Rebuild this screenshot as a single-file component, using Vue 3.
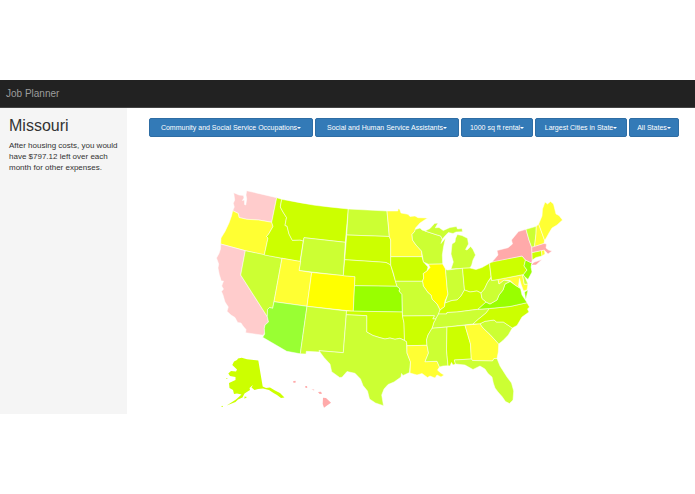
<script setup>
import { ref } from 'vue'

const selected = ref({ name: 'Missouri', left: '$797.12' })

const filters = [
  'Community and Social Service Occupations',
  'Social and Human Service Assistants',
  '1000 sq ft rental',
  'Largest Cities in State',
  'All States',
]

const states = [
  { name: 'Washington', tone: 'rose', d: 'M233.7 192.7L239 195L243.5 195.5L244 198L242.3 200.5L244.5 200L244.5 204.5L245.8 205L246.7 199L246 195L246.7 190.7L276.7 197.7L271.7 222.3L258.7 220L246.7 219.3L239 217.5L238.3 213.5L232.7 210.7L234.3 207L233.3 203.3L234.7 200Z' },
  { name: 'Oregon', tone: 'lemon', d: 'M232.7 210.7L238.3 213.5L239 217.5L246.7 219.3L258.7 220L271.7 222.3L273 226.5L268.7 234L266.5 236.5L268 238L264.3 255L245.3 250.7L220.7 244L221 238L225 231.5L229 223L231.5 216Z' },
  { name: 'California', tone: 'rose', d: 'M220.7 244L245.3 250.7L240.7 275L267.3 316.7L268.5 322L265 325L264.3 328.5L265 332L263.3 335.3L245.7 332.7L246 329.5L243 326L241 323L237.7 322.5L235 317.5L231 315L227 311.3L228.3 307L225 302L223 295L221.5 291.5L223.5 289L221.7 286L223.5 281L221.3 281L219.3 274.5L218 268L218.7 264L216.5 258L219 253.5L220.5 249Z' },
  { name: 'Nevada', tone: 'lime', d: 'M245.3 250.7L282 258.3L274 301.7L272.7 308.3L269.5 307.5L267.5 309.5L267.3 316.7L240.7 275Z' },
  { name: 'Idaho', tone: 'chartreuse', d: 'M276.7 197.7L281.7 199.3L280.3 207L283 212L286.5 217.5L285 225.5L287 226L289 234L292.3 240.3L300 240L303.3 241L300 261.5L264.3 255L268 238L266.5 236.5L268.7 234L273 226.5L271.7 222.3Z' },
  { name: 'Montana', tone: 'chartreuse', d: 'M281.7 199.3Q315 206.5 348.3 209L345.3 242.3L304 237.7L303.3 241L300 240L292.3 240.3L289 234L287 226L285 225.5L286.5 217.5L283 212L280.3 207Z' },
  { name: 'Wyoming', tone: 'lime', d: 'M304 237.7L345.3 242.3L343.3 275.7L299 270.5Z' },
  { name: 'Utah', tone: 'lemon', d: 'M282 258.3L300.7 261.5L299 270.5L311.7 272.5L307 306.3L274 301.7Z' },
  { name: 'Arizona', tone: 'green', d: 'M274 301.7L307 306.3L300.3 353.8L286.7 351.3L262.7 337.3L264.7 334L264.3 328.5L265 325L268.5 322L267.3 316.7L267.5 309.5L269.5 307.5L272.7 308.3Z' },
  { name: 'Colorado', tone: 'yellow', d: 'M311.7 272.5L355 276.7L353.3 311.3L307 306.3Z' },
  { name: 'New Mexico', tone: 'lime', d: 'M307 306.3L346.5 311L343.3 352.7L319 350.7L319.5 352L306.3 351.3L306 354L300.3 353.8Z' },
  { name: 'North Dakota', tone: 'lime', d: 'M348.3 209L387 211L389.3 236.5L346.7 235Z' },
  { name: 'South Dakota', tone: 'chartreuse', d: 'M346.7 235L389.3 236.5L390.7 240L390.7 265L386 262.5L380 262L344.7 259.7Z' },
  { name: 'Nebraska', tone: 'chartreuse', d: 'M344.7 259.7L380 262L386 262.5L390.7 265L393.3 274L397 286.3L354.5 285.7L355 276.7L343.3 275.7Z' },
  { name: 'Kansas', tone: 'emerald', d: 'M354.5 285.7L397 286.3L400 289L399 291L402 294.5L402.3 312L353.3 311.3Z' },
  { name: 'Oklahoma', tone: 'chartreuse', d: 'M346.5 311L402.3 312L402.5 316L404 323L404.5 340.3L400 338.3L395 339.3L390 338L385 339L380 337.7L373 335.5L366.7 332L366.7 315.7L346.3 314.7Z' },
  { name: 'Texas', tone: 'lime', d: 'M346.3 314.7L366.7 315.7L366.7 332L373 335.5L380 337.7L385 339L390 338L395 339.3L400 338.3L406.5 341.5L407 353L410.5 362L409.5 372.5L403 375.5L401.5 373.5L401 377L394 382L388 384.5L384 389L381.7 395L383.5 405.7L375.5 403L369.5 399L367.5 391L363 385.5L360.5 379L355 373.3L347 371.5L342 377.3L339.7 377.5L331.7 371.7L330 364L324 357.5L319 350.7L343.3 352.7Z' },
  { name: 'Minnesota', tone: 'lemon', d: 'M387 211L397.8 211L398 208.8L399.7 209.3L401 213L408 214.3L410 216.5L415 216L418 217.7L427.5 218L420 223L415.5 228L415 231L412 234.5L412.5 240L416 245L421.5 251L422 256.7L390.7 256.7L390.7 240L389.3 236.5L388.5 226Z' },
  { name: 'Iowa', tone: 'chartreuse', d: 'M390.7 256.7L422 256.7L423.5 262L428 267L427 271L423.3 273.5L423.7 278L422.5 281.3L395.5 281.3L393.3 273L390.7 265Z' },
  { name: 'Wisconsin', tone: 'lime', d: 'M415 229.5L420 228L422 230L425 231L435 234.3L440.7 236L442.3 239.3L441 243.5L445.5 238L443.5 247L442.3 255L442.7 264L428.5 264.3L423.5 262L421.5 251L416 245L412.5 240L412 234.5L415 231Z' },
  { name: 'Michigan', tone: 'lime', d: 'M425 231L430 228.5L434.5 223.5L438 223L435.3 227.8L439 227.5L443.3 230.5L450 227.5L456.5 226.5L457.5 229L462 228.5L462.5 231.7L456 232L453 233.5L448.3 232.5L444.5 236.5L442.3 239.3L440.7 236L435 234.3ZM457.3 234.5L462 235.5L467.5 238.3L468.5 244L465.5 249.5L467 250L470.7 246.5L473 249.5L475.5 255L473 260L471.7 265L470 268L451 269L453.3 262L451 254L452 244L455 242L455.5 238.5Z' },
  { name: 'Illinois', tone: 'yellow', d: 'M428.5 264.3L442.7 264L445.5 269L447.3 290L448 294L445 301L444.5 306.7L440 310L437 304L432 299L431 295L428.3 293L423.3 286L422.5 281.3L423.7 278L423.3 273.5L427 271L430 267.5Z' },
  { name: 'Indiana', tone: 'lime', d: 'M445.5 269.3L447.5 270L462.5 268.3L464.5 290L461 296L457 300L452 300.5L445 303L448 294L447.3 290Z' },
  { name: 'Ohio', tone: 'chartreuse', d: 'M462.5 268.3L470 268L476 269.5L482 267.5L489.5 263.3L491 277L487.5 282.5L484.5 289L481 293L477 291L470 292L464.5 290Z' },
  { name: 'Missouri', tone: 'lime', d: 'M395.5 281.3L422.5 281.3L423.3 286L428.3 293L431 295L432 299L437 304L440 310L438.5 314L436 319L432.7 319L434.3 315.7L402.5 316L402 294.5L399 291L400 289L397 286.3Z' },
  { name: 'Kentucky', tone: 'chartreuse', d: 'M438.5 314L440 310L444.5 306.7L445 303L452 300.5L457 300L461 296L464.5 290L470 292L477 291L481 293L482 298.5L486 302L478 309.3L457 312L447 312.5L446.5 314Z' },
  { name: 'Tennessee', tone: 'lime', d: 'M438.5 314L446.5 314L447 312.5L457 312L478 309.3L489.5 308.5L486 313L478 319.5L473 324L447 327L432 328.3L434 322Z' },
  { name: 'Arkansas', tone: 'chartreuse', d: 'M402.5 316L434.3 315.7L432.7 319L436 319L434 322L432 328.3L428 335L426.5 340L427 345.3L407 345.7L406.5 341.5L404.5 340.3L404 323Z' },
  { name: 'Louisiana', tone: 'lemon', d: 'M407 345.7L427 345.3L428.5 353L425 361.7L437 361.3L439.5 367L437.5 370L440 372.5L444 375L441 377L437 375L435 378L430 376L427.5 377.5L422 373.5L417 375L410 373L410.5 362L407 353Z' },
  { name: 'Mississippi', tone: 'lime', d: 'M432 328.3L447 327L446.5 350L448 365.7L443 366L439.5 367L437 361.3L425 361.7L428.5 353L427 345.3L426.5 340L428 335Z' },
  { name: 'Alabama', tone: 'chartreuse', d: 'M447 327L465 325.3L470.5 344L471.3 359L454.3 360L455.5 364L453 365L451.5 362.5L450 366L448 365.7L446.5 350Z' },
  { name: 'Georgia', tone: 'lemon', d: 'M465 325.3L480 323.7L483 328L490 334.5L498.7 344L498.3 352L497 358.5L494 358.5L492.5 361L472.5 360.5L471.3 359L470.5 344Z' },
  { name: 'Florida', tone: 'lime', d: 'M454.3 360L471.3 359L472.5 360.5L492.5 361L494 358.5L497 358.5L500 366L507 377L511.5 383L513.7 391L513 400L509.5 403.5L505.5 401.5L502 396.5L498 392L495 388L493.3 383L492 377L488 373.5L485 369L480 366L473 369.5L465 365L455.5 364Z' },
  { name: 'South Carolina', tone: 'lime', d: 'M480 323.7L485 321.3L494 320L496.5 322L503.3 322L512.3 328L508.3 335L503 340.5L498.7 344L490 334.5L483 328Z' },
  { name: 'North Carolina', tone: 'chartreuse', d: 'M489.5 308.5L510 306.5L527 302.7L529.5 307L527.5 309L529 312L522 317L517 325.5L512.3 328L503.3 322L496.5 322L494 320L485 321.3L480 323.7L473 324L478 319.5L486 313Z' },
  { name: 'Virginia', tone: 'emerald', d: 'M478 309.3L486 302L490 304L497 300L499 295L503 290L505 284L510 281.5L515 285L520.5 288.5L522 295L526 301L527 302.7L510 306.5L489.5 308.5ZM524.5 292L528 290L525.7 300Z' },
  { name: 'West Virginia', tone: 'lime', d: 'M490.7 278.3L491.7 280.5L498 279.5L499 284L504 280L510 281.5L505 284L503 290L499 295L497 300L490 304L486 302L482 298.5L481 293L484.5 289L487.5 282.5Z' },
  { name: 'Maryland', tone: 'lemon', d: 'M498 279.5L522.5 274.7L524.3 284.3L528 284L527 290L523.5 291L521 284L519.5 278.5L518.5 286L520.5 288.5L515 285L510 280.5L504 280L499 284Z' },
  { name: 'Delaware', tone: 'lime', d: 'M522.5 274.7L524.5 276L528 284L524.3 284.3Z' },
  { name: 'Pennsylvania', tone: 'chartreuse', d: 'M489.5 263.3L494 261L522 256L525.5 260L524 266L527 270L523.5 274.5L498 279.5L491.7 280.5Z' },
  { name: 'New Jersey', tone: 'emerald', d: 'M525.5 260L532 263L531 267L532 272L528 279.5L524 276L523.5 274.5L527 270L524 266Z' },
  { name: 'New York', tone: 'coral', d: 'M492 262L498 255L497 250.5L508 247.7L512.5 244L511.5 240L518.5 231.5L526 229.3L529 240L531.7 247.3L532.3 260L531.5 263L525.5 260L522 256ZM531 265L534 262.3L542 259.5L536 265Z' },
  { name: 'Vermont', tone: 'lime', d: 'M526 229.3L536.3 226.3L536 234L534.5 246.7L531.7 247.3L529 240Z' },
  { name: 'New Hampshire', tone: 'lemon', d: 'M536.3 226.3L538.7 224L544.5 240L544 243.5L534.5 246.7L536 234Z' },
  { name: 'Maine', tone: 'lemon', d: 'M538.7 224L542 216L542.5 209L545 202L547.5 204L550.5 201.5L553.5 204L556 214L559 215.5L562.5 220L557 225L552 228L549 233L545.7 239L544.5 240Z' },
  { name: 'Massachusetts', tone: 'coral', d: 'M531.7 247.3L544 243.5L546.5 244L546 248L548.5 250L552 251L548 254L544.5 250.3L532 252.7Z' },
  { name: 'Connecticut', tone: 'chartreuse', d: 'M532 252.7L541.5 250.7L542 256L536 257.5L532.3 260Z' },
  { name: 'Rhode Island', tone: 'lemon', d: 'M541.5 250.7L544.3 250L545 254L542 256Z' },
  { name: 'Alaska', tone: 'chartreuse', island: true, d: 'M232.3 365L234 361.5L237 360L238 358.5L241.7 357.7L247 359.3L258.3 360.5L262.7 386.5L266 388L270 387.5L275 390.5L280 393L284.5 397.5L281 398L277 395L273.5 393L269 390L263 388.5L258 389L254.5 390L251.5 387.5L253 385L249.5 388L250 390L244.5 393.5L242.5 397.5L238 399.5L235.5 402L226.7 405.5L236 399.5L241.5 394.5L237 393.5L234 394L233 390L229.5 388L229 383L235.5 380L235.5 377L230 376L228.3 373.5L231 371L236 371.5L237 369.5ZM244.5 396.5L247 397L244.5 398.7ZM220.5 407L223 405.8L223 406.7ZM226 378L228 378.7L226.5 379Z' },
  { name: 'Hawaii', tone: 'coral', island: true, d: 'M293 381.3L295.3 380.7L296 382.3L293.7 383ZM305 386.3L307 386L307.3 387.7L305.7 388ZM311.5 389L314.3 389.7L314 390.5ZM318 392L321 391.7L322 393.7L319.7 394ZM323 397.7L326 398L331 402.7L327 405.5L324 407.7L322.7 404Z' },
]
</script>

<template>
  <div class="page">
    <header class="navbar">
      <a class="brand" href="#">Job Planner</a>
    </header>
    <div class="body">
      <aside class="sidebar">
        <h1>{{ selected.name }}</h1>
        <p>After housing costs, you would have {{ selected.left }} left over each month for other expenses.</p>
      </aside>
      <main class="content">
        <div class="filters">
          <button v-for="label in filters" :key="label" type="button" class="filter" aria-haspopup="true">
            {{ label }}<span class="caret"></span>
          </button>
        </div>
        <svg class="map" viewBox="149 137 530 277" role="img" aria-label="United States">
          <path v-for="s in states" :key="s.name" :class="['state', s.tone, { island: s.island }]" :d="s.d" />
        </svg>
      </main>
    </div>
  </div>
</template>

<style>
body {
  background: #fff;
}
</style>

<style scoped>
.page {
  padding: 80px 0;
  font-family: "Liberation Sans", Arial, sans-serif;
  font-size: 8px;
  color: #333;
}
.navbar {
  display: flex;
  align-items: center;
  box-sizing: border-box;
  height: 28px;
  padding: 0 6px;
  background: #222;
  border-bottom: 1px solid #444;
}
.brand {
  font-size: 10px;
  color: #9d9d9d;
  text-decoration: none;
}
.body {
  display: grid;
  grid-template-columns: 127px minmax(0, 1fr);
}
.sidebar {
  padding: 8px 9px;
  background: #f5f5f5;
}
h1 {
  margin: 0 0 4px;
  font-size: 16px;
  font-weight: 400;
  line-height: 20px;
}
p {
  margin: 0;
  line-height: 11px;
}
.content {
  padding: 10px 16px 0 22px;
}
.filters {
  display: grid;
  grid-template-columns: 164fr 144fr 72fr 92fr 50fr;
  gap: 2px;
}
.filter {
  display: flex;
  align-items: center;
  justify-content: center;
  height: 19px;
  padding: 0 4px;
  border: 1px solid #2e6da4;
  border-radius: 2px;
  background: #337ab7;
  color: #fff;
  font-family: inherit;
  font-size: 7px;
  white-space: nowrap;
}
.caret {
  border-top: 2px solid #fff;
  border-right: 2px solid transparent;
  border-left: 2px solid transparent;
}
.map {
  display: block;
  width: 100%;
  height: auto;
}
.state {
  stroke: #fff;
  stroke-opacity: 0.5;
  stroke-width: 1;
  stroke-linejoin: round;
}
.island { stroke: none; }
.rose { fill: #fcc; }
.coral { fill: #faa; }
.lemon { fill: #ff3; }
.yellow { fill: #ff0; }
.lime { fill: #cf3; }
.chartreuse { fill: #cf0; }
.green { fill: #9f3; }
.emerald { fill: #9f0; }
</style>
